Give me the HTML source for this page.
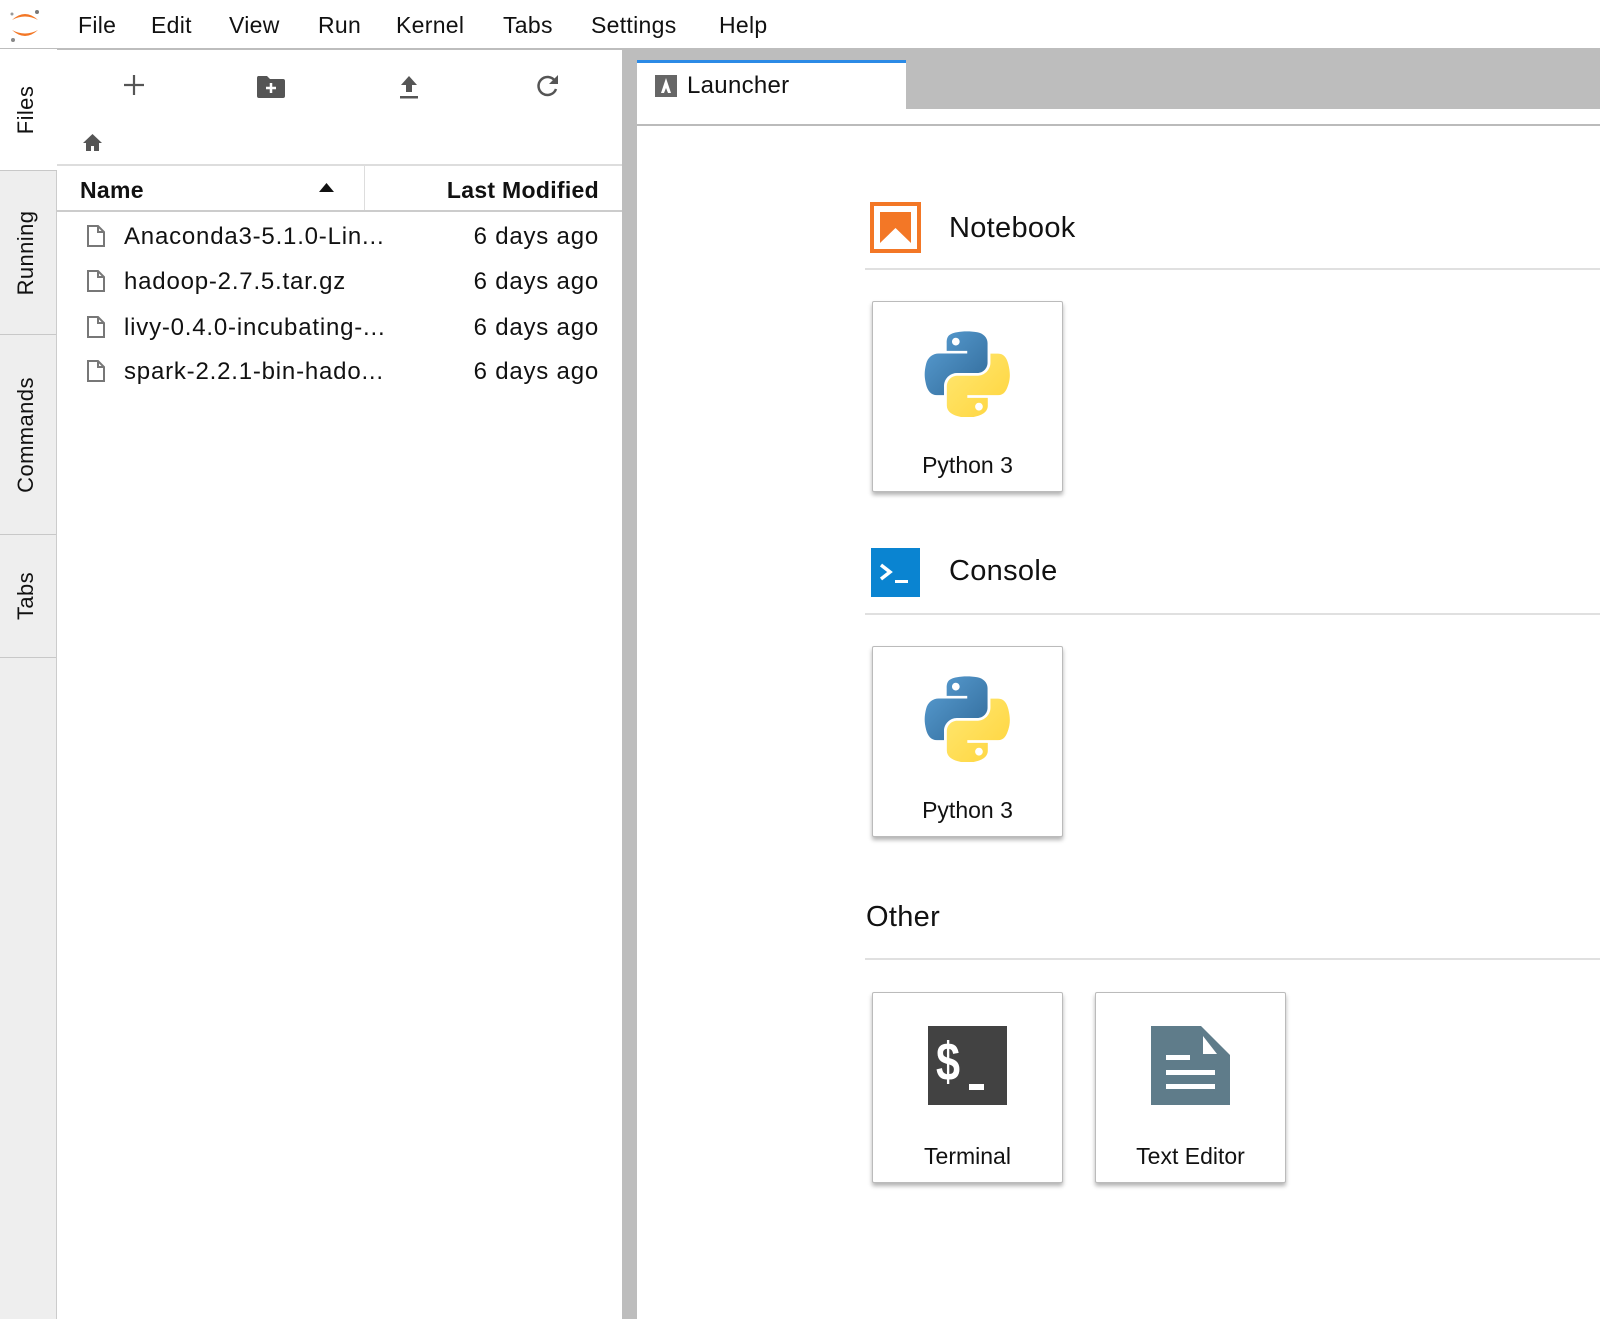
<!DOCTYPE html>
<html><head><meta charset="utf-8"><style>
*{box-sizing:border-box;margin:0;padding:0}
body{width:1600px;height:1319px;overflow:hidden;background:#fff;font-family:"Liberation Sans",sans-serif;color:#111;position:relative}
.a{position:absolute}
.menu{font-size:23px;top:12px;letter-spacing:0.3px}
.side{left:0;top:49px;width:57px;height:1270px;background:#eee;border-right:1px solid #ccc}
.stab{position:absolute;left:0;width:56px;border-bottom:1px solid #c8c8c8;background:#eee}
.stab span{position:absolute;left:46%;top:50%;transform:translate(-50%,-50%) rotate(-90deg);font-size:22px;white-space:nowrap;letter-spacing:0.4px}
.row{font-size:24px;left:124px;letter-spacing:0.8px}
.date{font-size:24px;right:1001px;text-align:right;letter-spacing:0.8px}
.card{position:absolute;width:191px;height:191px;background:#fff;border:1px solid #bbb;border-radius:2px;box-shadow:0 3px 4px rgba(0,0,0,.3)}
.card .lbl{position:absolute;left:0;right:0;top:150px;text-align:center;font-size:23px}
.h{font-size:29px;letter-spacing:0.3px}
.hr{position:absolute;left:865px;right:0;height:2px;background:#e0e0e0}
</style></head><body>
<svg class="a" style="left:8px;top:6px" width="34" height="38" viewBox="0 0 34 38">
<path d="M4 14 Q17 2 30 14 Q17 7 4 14Z" fill="#f37726"/>
<path d="M4 24 Q17 36 30 24 Q17 31 4 24Z" fill="#f37726"/>
<circle cx="29" cy="6" r="2" fill="#777"/><circle cx="4" cy="8" r="1.5" fill="#999"/><circle cx="5" cy="34" r="2" fill="#888"/>
</svg>
<div class="a menu" style="left:78px">File</div>
<div class="a menu" style="left:151px">Edit</div>
<div class="a menu" style="left:229px">View</div>
<div class="a menu" style="left:318px">Run</div>
<div class="a menu" style="left:396px">Kernel</div>
<div class="a menu" style="left:503px">Tabs</div>
<div class="a menu" style="left:591px">Settings</div>
<div class="a menu" style="left:719px">Help</div>
<div class="a" style="left:0;top:48px;width:1600px;height:2px;background:#bdbdbd"></div>

<div class="a side">
 <div class="stab" style="top:0;height:122px;background:#fff;width:57px"><span>Files</span></div>
 <div class="stab" style="top:122px;height:164px"><span>Running</span></div>
 <div class="stab" style="top:286px;height:200px"><span>Commands</span></div>
 <div class="stab" style="top:486px;height:123px"><span>Tabs</span></div>
</div>

<svg class="a" style="left:122px;top:73px" width="24" height="24"><path d="M12 2v20M2 12h20" stroke="#555" stroke-width="2.2"/></svg>
<svg class="a" style="left:256px;top:73px" width="30" height="26" viewBox="0 0 30 26"><path d="M2 3h9l3 3h13a2 2 0 0 1 2 2v15a2 2 0 0 1-2 2H3a2 2 0 0 1-2-2V5a2 2 0 0 1 1-2z" fill="#555"/><path d="M15 10v10M10 15h10" stroke="#fff" stroke-width="2.5"/></svg>
<svg class="a" style="left:398px;top:74px" width="22" height="26" viewBox="0 0 22 26"><path d="M11 2l8 9h-5v7h-6v-7H3z" fill="#555"/><rect x="2" y="22" width="18" height="2.5" fill="#555"/></svg>
<svg class="a" style="left:535px;top:72px" width="26" height="26" viewBox="0 0 26 26"><path d="M20 9A9 9 0 1 0 21 17" fill="none" stroke="#555" stroke-width="2.5"/><path d="M23 3v9h-9z" fill="#555"/></svg>
<svg class="a" style="left:82px;top:133px" width="21" height="19" viewBox="0 0 21 19"><path d="M10.5 1L1 10h3v8h5v-5h3v5h5v-8h3z" fill="#555"/></svg>
<div class="a" style="left:57px;top:164px;width:565px;height:2px;background:#ddd"></div>
<div class="a" style="left:57px;top:210px;width:565px;height:2px;background:#ccc"></div>
<div class="a" style="left:364px;top:166px;width:1px;height:44px;background:#ddd"></div>
<div class="a" style="left:80px;top:177px;font-size:23px;font-weight:bold;letter-spacing:0.3px">Name</div>
<svg class="a" style="left:319px;top:183px" width="15" height="9"><path d="M0 9L7.5 0 15 9z" fill="#111"/></svg>
<div class="a" style="right:1001px;top:177px;font-size:23px;font-weight:bold;letter-spacing:0.3px">Last Modified</div>

<svg width="0" height="0" style="position:absolute"><defs><g id="fi"><path d="M2 1h10l6 6v14H2z" fill="none" stroke="#777" stroke-width="2"/><path d="M12 1v6h6" fill="none" stroke="#777" stroke-width="2"/></g></defs></svg>
<svg class="a" style="left:86px;top:225px" width="22" height="24"><use href="#fi"/></svg>
<svg class="a" style="left:86px;top:270px" width="22" height="24"><use href="#fi"/></svg>
<svg class="a" style="left:86px;top:316px" width="22" height="24"><use href="#fi"/></svg>
<svg class="a" style="left:86px;top:360px" width="22" height="24"><use href="#fi"/></svg>
<div class="a row" style="top:223px">Anaconda3-5.1.0-Lin...</div>
<div class="a row" style="top:268px">hadoop-2.7.5.tar.gz</div>
<div class="a row" style="top:314px">livy-0.4.0-incubating-...</div>
<div class="a row" style="top:358px">spark-2.2.1-bin-hado...</div>
<div class="a date" style="top:223px">6 days ago</div>
<div class="a date" style="top:268px">6 days ago</div>
<div class="a date" style="top:314px">6 days ago</div>
<div class="a date" style="top:358px">6 days ago</div>

<div class="a" style="left:622px;top:50px;width:15px;height:1269px;background:#bdbdbd"></div>

<div class="a" style="left:637px;top:50px;width:963px;height:59px;background:#bdbdbd"></div>
<div class="a" style="left:637px;top:60px;width:269px;height:66px;background:#fff;border-top:3px solid #2b8ae6"></div>
<div class="a" style="left:637px;top:124px;width:963px;height:2px;background:#bbb"></div>
<svg class="a" style="left:655px;top:75px" width="22" height="22" viewBox="0 0 22 22"><rect width="22" height="22" fill="#666"/><path d="M11 3l5 15h-3l-2-5-2 5H6z" fill="#fff"/></svg>
<div class="a" style="left:687px;top:72px;font-size:24px;letter-spacing:0.3px">Launcher</div>

<div class="a" style="left:870px;top:202px;width:51px;height:51px;border:4px solid #f37726;background:#fff"></div>
<svg class="a" style="left:880px;top:212px" width="31" height="31" viewBox="0 0 31 31"><path d="M0 0h31v31L15.5 16 0 31z" fill="#f37726"/></svg>
<div class="a h" style="left:949px;top:212px">Notebook</div>
<div class="hr" style="top:268px"></div>

<svg width="0" height="0" style="position:absolute"><defs>
<linearGradient id="gb" x1="0" y1="0" x2="1" y2="1"><stop offset="0" stop-color="#5a9fd4"/><stop offset="1" stop-color="#306998"/></linearGradient>
<linearGradient id="gy" x1="0" y1="0" x2="1" y2="1"><stop offset="0" stop-color="#ffe873"/><stop offset="1" stop-color="#ffd43b"/></linearGradient>
<g id="py">
<path fill="url(#gb)" d="M54.9,0.5c-4.6,0-8.9,0.4-12.7,1.1C31,3.5,29,7.7,29,15.3v10.1h26.3v3.4H29H19.1c-7.6,0-14.3,4.6-16.4,13.3c-2.4,10-2.5,16.2,0,26.6c1.9,7.7,6.3,13.3,13.900,13.3h9v-12c0-8.7,7.5-16.3,16.4-16.3h26.2c7.3,0,13.1-6,13.1-13.3V15.3c0-7.1-6-12.5-13.1-13.7C63.6,0.9,59.5,0.5,54.9,0.5z M40.7,8.6c2.7,0,4.9,2.3,4.9,5c0,2.7-2.2,4.9-4.9,4.9c-2.7,0-4.9-2.2-4.9-4.9C35.8,10.8,38,8.6,40.7,8.6z"/>
<path fill="url(#gy)" d="M85,28.8v11.7c0,9.1-7.7,16.7-16.4,16.7H42.3c-7.2,0-13.1,6.1-13.1,13.3v25c0,7.1,6.2,11.3,13.1,13.3c8.3,2.4,16.3,2.9,26.2,0c6.6-1.9,13.1-5.7,13.1-13.3V85.5H55.4v-3.4h26.2h13.1c7.6,0,10.5-5.3,13.1-13.3c2.7-8.2,2.6-16.1,0-26.6c-1.9-7.6-5.5-13.3-13.1-13.3H85z M70.3,91.8c2.7,0,4.9,2.2,4.9,4.9c0,2.7-2.2,5-4.9,5c-2.7,0-4.9-2.3-4.9-5C65.4,94,67.6,91.8,70.3,91.8z"/>
</g></defs></svg>

<div class="card" style="left:872px;top:301px">
 <svg class="a" style="left:51px;top:29px" width="86" height="86" viewBox="0 0 110 110"><use href="#py"/></svg>
 <div class="lbl">Python 3</div>
</div>

<div class="a" style="left:871px;top:548px;width:49px;height:49px;background:#0a84d1"></div>
<svg class="a" style="left:871px;top:548px" width="49" height="49" viewBox="0 0 49 49"><path d="M10 17l9 7-9 7" fill="none" stroke="#fff" stroke-width="3.5"/><rect x="24" y="32" width="13" height="3" fill="#fff"/></svg>
<div class="a h" style="left:949px;top:555px">Console</div>
<div class="hr" style="top:613px"></div>

<div class="card" style="left:872px;top:646px">
 <svg class="a" style="left:51px;top:29px" width="86" height="86" viewBox="0 0 110 110"><use href="#py"/></svg>
 <div class="lbl">Python 3</div>
</div>

<div class="a h" style="left:866px;top:901px">Other</div>
<div class="hr" style="top:958px"></div>

<div class="card" style="left:872px;top:992px">
 <div class="a" style="left:55px;top:33px;width:79px;height:79px;background:#424242"></div>
 <div class="a" style="left:63px;top:42px;font-size:54px;line-height:54px;font-weight:bold;color:#fff;transform:scaleX(0.8);transform-origin:left">$</div>
 <div class="a" style="left:96px;top:91px;width:15px;height:6px;background:#fff"></div>
 <div class="lbl">Terminal</div>
</div>
<div class="card" style="left:1095px;top:992px">
 <svg class="a" style="left:55px;top:33px" width="79" height="79" viewBox="0 0 79 79"><path d="M0 0h50l29 29v50H0z" fill="#5f7c8a"/><path d="M52 10v18h14z" fill="#fff"/><rect x="15" y="29" width="24" height="5" fill="#fff"/><rect x="15" y="44" width="49" height="5" fill="#fff"/><rect x="15" y="58" width="49" height="5" fill="#fff"/></svg>
 <div class="lbl">Text Editor</div>
</div>
</body></html>
